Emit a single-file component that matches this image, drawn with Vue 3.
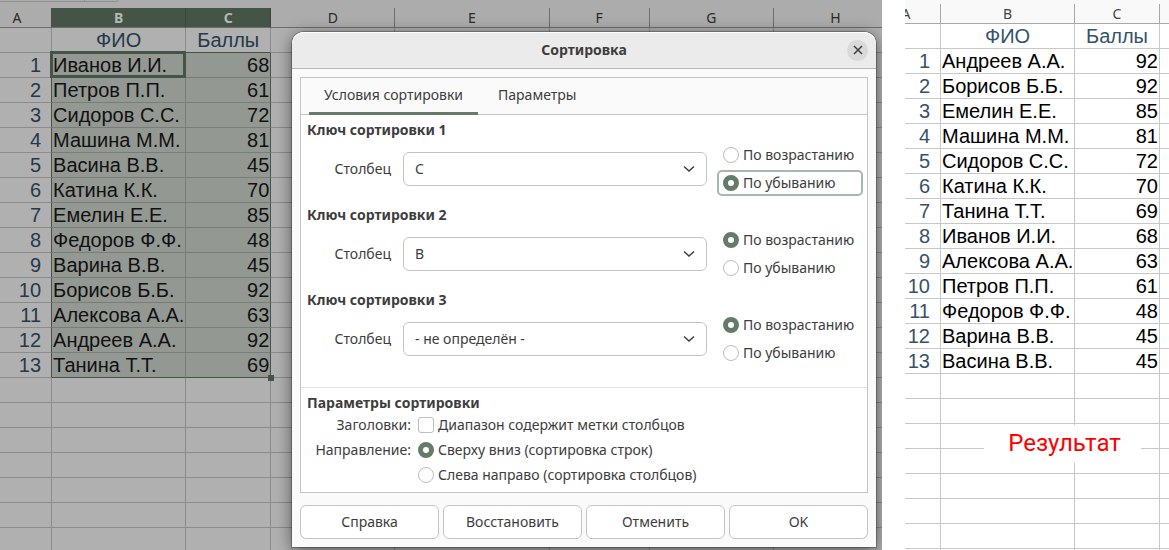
<script setup>
import { ref, reactive } from 'vue'

const sourceRows = [
  ['Иванов И.И.', 68], ['Петров П.П.', 61], ['Сидоров С.С.', 72], ['Машина М.М.', 81],
  ['Васина В.В.', 45], ['Катина К.К.', 70], ['Емелин Е.Е.', 85], ['Федоров Ф.Ф.', 48],
  ['Варина В.В.', 45], ['Борисов Б.Б.', 92], ['Алексова А.А.', 63], ['Андреев А.А.', 92],
  ['Танина Т.Т.', 69],
]
const resultRows = [
  ['Андреев А.А.', 92], ['Борисов Б.Б.', 92], ['Емелин Е.Е.', 85], ['Машина М.М.', 81],
  ['Сидоров С.С.', 72], ['Катина К.К.', 70], ['Танина Т.Т.', 69], ['Иванов И.И.', 68],
  ['Алексова А.А.', 63], ['Петров П.П.', 61], ['Федоров Ф.Ф.', 48], ['Варина В.В.', 45],
  ['Васина В.В.', 45],
]
const restColumns = ['D', 'E', 'F', 'G', 'H']
const columnOptions = ['- не определён -', 'B', 'C']
const keys = reactive([
  { id: 1, column: 'C', order: 'desc' },
  { id: 2, column: 'B', order: 'asc' },
  { id: 3, column: '- не определён -', order: 'asc' },
])
const tabs = ['Условия сортировки', 'Параметры']
const activeTab = ref(0)
const hasHeaders = ref(false)
const direction = ref('rows')
const actions = ['Справка', 'Восстановить', 'Отменить', 'OK']
</script>

<template>
  <main class="page">
    <section class="pane source">
      <div class="formula-bar"><span class="name-box"></span><span class="name-end"></span></div>
      <table class="sheet source-sheet">
        <colgroup>
          <col class="col-a" /><col class="col-b" /><col class="col-c" />
          <col class="col-d" /><col class="col-e" /><col class="col-f" />
          <col class="col-d" /><col class="col-d" />
        </colgroup>
        <thead>
          <tr>
            <th>A</th>
            <th class="picked">B</th>
            <th class="picked">C</th>
            <th v-for="c in restColumns" :key="c">{{ c }}</th>
          </tr>
        </thead>
        <tbody>
          <tr class="titles">
            <td></td><td>ФИО</td><td>Баллы</td>
            <td v-for="c in restColumns" :key="c"></td>
          </tr>
          <tr v-for="(row, i) in sourceRows" :key="i" class="selected">
            <td class="num">{{ i + 1 }}</td>
            <td class="name" :class="{ cursor: i === 0 }">{{ row[0] }}</td>
            <td class="score" :class="{ corner: i === sourceRows.length - 1 }">{{ row[1] }}</td>
            <td v-for="c in restColumns" :key="c"></td>
          </tr>
          <tr v-for="n in 7" :key="'e' + n">
            <td v-for="c in 8" :key="c"></td>
          </tr>
        </tbody>
      </table>

      <div class="dialog" role="dialog" aria-labelledby="dialog-title">
        <header class="title-bar">
          <h1 id="dialog-title">Сортировка</h1>
          <button class="close" type="button" aria-label="Закрыть">
            <svg viewBox="0 0 10 10" width="10" height="10"><path d="M1 1l8 8M9 1L1 9" /></svg>
          </button>
        </header>
        <div class="notebook">
          <div class="tabs" role="tablist">
            <button
              v-for="(tab, i) in tabs" :key="tab" type="button" role="tab" class="tab"
              :class="{ active: activeTab === i }" :aria-selected="activeTab === i" @click="activeTab = i"
            >{{ tab }}</button>
          </div>
          <div class="keys">
            <section v-for="key in keys" :key="key.id" class="key">
              <h2>Ключ сортировки {{ key.id }}</h2>
              <div class="key-row">
                <label class="column-label" :for="'column-' + key.id">Столбец</label>
                <div class="select-wrap">
                  <select :id="'column-' + key.id" v-model="key.column">
                    <option v-for="o in columnOptions" :key="o">{{ o }}</option>
                  </select>
                  <svg class="chevron" viewBox="0 0 12 8" width="12" height="8"><path d="M1 1.5l5 4.5 5-4.5" /></svg>
                </div>
                <div class="orders">
                  <label class="choice">
                    <input v-model="key.order" type="radio" :name="'order-' + key.id" value="asc" />
                    <span>По возрастанию</span>
                  </label>
                  <label class="choice" :class="{ focused: key.id === 1 }">
                    <input v-model="key.order" type="radio" :name="'order-' + key.id" value="desc" />
                    <span>По убыванию</span>
                  </label>
                </div>
              </div>
            </section>
          </div>
          <section class="options">
            <h2>Параметры сортировки</h2>
            <div class="option">
              <span class="option-label">Заголовки:</span>
              <label class="choice"><input v-model="hasHeaders" type="checkbox" /><span>Диапазон содержит метки столбцов</span></label>
            </div>
            <div class="option">
              <span class="option-label">Направление:</span>
              <label class="choice"><input v-model="direction" type="radio" name="direction" value="rows" /><span>Сверху вниз (сортировка строк)</span></label>
            </div>
            <div class="option">
              <span class="option-label"></span>
              <label class="choice"><input v-model="direction" type="radio" name="direction" value="columns" /><span>Слева направо (сортировка столбцов)</span></label>
            </div>
          </section>
        </div>
        <footer class="actions">
          <button v-for="a in actions" :key="a" type="button">{{ a }}</button>
        </footer>
      </div>
    </section>

    <section class="pane result">
      <table class="sheet result-sheet">
        <colgroup>
          <col class="col-a" /><col class="col-b" /><col class="col-c" /><col />
        </colgroup>
        <thead>
          <tr><th>A</th><th>B</th><th>C</th><th></th></tr>
        </thead>
        <tbody>
          <tr class="titles"><td></td><td>ФИО</td><td>Баллы</td><td></td></tr>
          <tr v-for="(row, i) in resultRows" :key="i">
            <td class="num">{{ i + 1 }}</td>
            <td class="name">{{ row[0] }}</td>
            <td class="score">{{ row[1] }}</td>
            <td></td>
          </tr>
          <tr v-for="n in 8" :key="'e' + n"><td v-for="c in 4" :key="c"></td></tr>
        </tbody>
      </table>
      <p class="caption">Результат</p>
    </section>
  </main>
</template>

<style>
body { margin: 0; background: #fff; }
</style>

<style scoped>
* { box-sizing: border-box; }
.page {
  display: grid;
  grid-template-columns: minmax(0, 882fr) minmax(0, 264fr);
  column-gap: 23px;
  height: 100vh;
  overflow: hidden;
  font-family: "Noto Sans", "Open Sans", sans-serif;
  font-size: 14px;
  color: #3d3d3d;
}
.pane { position: relative; overflow: hidden; }
.source { background: #acacac; }

.formula-bar {
  height: 8px;
  display: flex;
}
.name-box, .name-end {
  height: 2px;
  border-bottom: 1px solid #8e8e8e;
  border-right: 1px solid #8e8e8e;
}
.name-box { width: 85px; }
.name-end { width: 33px; border-bottom-right-radius: 4px; }

.sheet {
  --line: #c8c8c8;
  --head-line: #a8a8a8;
  --head-bg: #f9f9f9;
  --cell-bg: #fff;
  --accent: #355269;
  table-layout: fixed;
  border-collapse: separate;
  border-spacing: 0;
  font-family: "Liberation Sans", Arial, sans-serif;
  font-size: 20px;
  line-height: 24px;
  color: #000;
}
.source-sheet {
  --line: #8b8b8b;
  --head-line: #6e6e6e;
  --head-bg: #acacac;
  --cell-bg: #b0b0b0;
  --accent: #25394a;
  --pick: #445547;
  width: 915px;
  margin-left: -17px;
  color: #111;
}
.result-sheet {
  width: calc(100% + 33px);
  margin-left: -33px;
}
.result { padding-top: 4px; background: linear-gradient(#f9f9f9 4px, #fff 4px); }
.result-sheet th:last-child, .result-sheet td:last-child { border-right: 0; }
.col-a { width: 69px; }
.col-b { width: 134px; }
.col-c { width: 85px; }
.col-d { width: 124px; }
.col-e { width: 154px; }
.col-f { width: 100px; }
.sheet th {
  height: 20px;
  padding: 0;
  font: 14px/19px "Noto Sans", "Open Sans", sans-serif;
  color: #444;
  background: var(--head-bg);
  border-right: 1px solid var(--head-line);
  border-bottom: 1px solid var(--head-line);
}
.source-sheet th { color: #2a2a2a; }
.source-sheet th:first-child { border-right-color: var(--pick); }
.source-sheet th.picked {
  color: #b4b9b4;
  font-weight: 700;
  background: var(--pick);
  border-right-color: #38473b;
}
.sheet td {
  position: relative;
  height: 25px;
  padding: 0 1px;
  white-space: nowrap;
  background: var(--cell-bg);
  border-right: 1px solid var(--line);
  border-bottom: 1px solid var(--line);
}
.titles td { text-align: center; color: var(--accent); }
.sheet .num { text-align: right; padding-right: 10px; color: var(--accent); }
.sheet .score { text-align: right; }
.source-sheet .titles td:nth-child(3) { border-bottom-color: var(--pick); }
.selected .name, .selected .score {
  background: #949893;
  border-color: #787d78;
}
.selected .num, .selected .score { border-right-color: var(--pick); }
.selected:has(.corner) .name, .selected .corner { border-bottom-color: var(--pick); }
.sheet .cursor, .sheet .corner { z-index: 1; }
.cursor::after {
  content: "";
  position: absolute;
  inset: -2px -1px -1px -2px;
  border: 3px solid var(--pick);
}
.corner::after {
  content: "";
  position: absolute;
  right: -4px;
  bottom: -4px;
  width: 6px;
  height: 6px;
  background: var(--pick);
}

.caption {
  position: absolute;
  left: 79px;
  right: 28px;
  top: 425px;
  margin: 0;
  padding-left: 4px;
  background: #fff;
  color: #f00;
  text-align: center;
  font: 24px/37px Roboto, sans-serif;
  z-index: 1;
}

.dialog {
  position: absolute;
  z-index: 2;
  top: 32px;
  left: 292px;
  right: 6px;
  background: #fafafa;
  border-radius: 12px 12px 0 0;
  box-shadow: 0 0 0 1px rgba(0, 0, 0, 0.25), 0 3px 16px rgba(0, 0, 0, 0.55);
}
.dialog button, .dialog select { font: inherit; color: inherit; }
.title-bar {
  position: relative;
  display: flex;
  align-items: center;
  justify-content: center;
  height: 37px;
  background: #ebebeb;
  border-bottom: 1px solid #b9b9b9;
  border-radius: 12px 12px 0 0;
  box-shadow: inset 0 1px #fff;
}
h1, h2 { margin: 0; font-size: 14px; font-weight: 700; line-height: 20px; }
.close {
  position: absolute;
  right: 8px;
  width: 21px;
  height: 21px;
  padding: 0;
  display: grid;
  place-items: center;
  border: 0;
  border-radius: 50%;
  background: #d9d9d9;
}
svg { fill: none; stroke: #3d3d3d; stroke-width: 1.5; }
.notebook {
  margin: 8px 8px 12px;
  background: #fff;
  border: 1px solid #c4c4c4;
}
.tabs {
  display: flex;
  gap: 5px;
  height: 37px;
  padding-left: 8px;
  background: #fafafa;
  border-bottom: 1px solid #c4c4c4;
}
.dialog .tab {
  height: 37px;
  padding: 0 15px;
  border: 0;
  border-bottom: 3px solid transparent;
  background: none;
  line-height: 34px;
}
.dialog .tab.active { border-bottom-color: #657b69; }
.keys {
  padding: 5px 4px 17px 6px;
  border-bottom: 1px solid #e1e1e1;
}
.key { height: 85px; }
.key:last-child { height: 80px; }
.key-row { display: flex; align-items: flex-start; }
.column-label {
  width: 96px;
  padding: 12px 12px 0 0;
  text-align: right;
  line-height: 34px;
}
.select-wrap { position: relative; flex: 1; margin: 12px 10px 0 0; }
.select-wrap select {
  display: block;
  width: 100%;
  height: 34px;
  padding: 0 36px 2px 11px;
  appearance: none;
  background: #fff;
  border: 1px solid #c4c4c4;
  border-radius: 6px;
}
.chevron { position: absolute; right: 12px; top: 13px; pointer-events: none; }
.orders { width: 146px; display: grid; gap: 2px; padding-top: 2px; }
.choice { display: flex; align-items: center; gap: 4px; line-height: 22px; white-space: nowrap; }
.orders .choice { height: 26px; padding: 0 4px; border: 2px solid transparent; border-radius: 5px; }
.orders .focused { border-color: #a9b8ac; }
.choice input {
  flex: none;
  appearance: none;
  width: 16px;
  height: 16px;
  margin: 0;
  border: 1px solid #bdbdbd;
  border-radius: 50%;
  background: #fff;
}
.choice input[type="checkbox"] { border-radius: 3px; }
.choice input[type="radio"]:checked { border: 5px solid #657b69; }
.choice input[type="checkbox"]:checked { background: #657b69; }
.options { padding: 5px 6px; }
.options h2 { line-height: 19px; }
.option { display: flex; align-items: center; height: 25px; }
.option-label { width: 104px; margin-right: 7px; text-align: right; }
.actions {
  display: grid;
  grid-template-columns: repeat(4, 1fr);
  gap: 4px;
  padding: 0 8px 8px;
}
.actions button {
  height: 34px;
  padding: 0 0 2px;
  background: #fff;
  border: 1px solid #c4c4c4;
  border-radius: 6px;
}
</style>
